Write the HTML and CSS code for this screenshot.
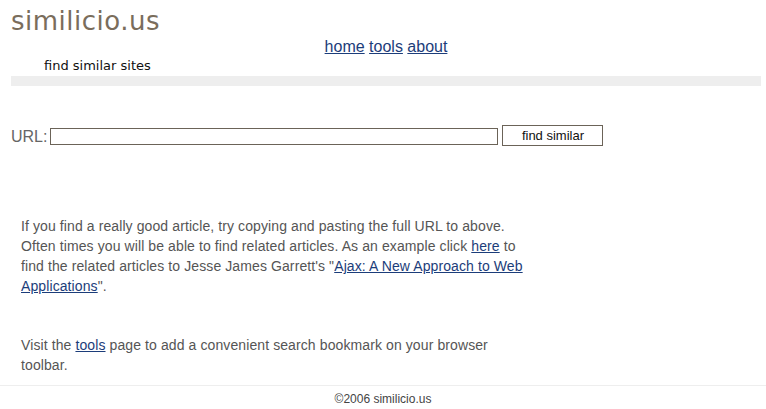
FILE: index.html
```html
<!DOCTYPE html>
<html lang="en">
<head>
  <meta charset="UTF-8">
  <title>similicio.us</title>
  <link rel="stylesheet" href="styles.css">
</head>
<body>
  <div class="page">
    <header>
      <div class="logo">similicio.us</div>
      <nav>
        <a href="#">home</a> <a href="#">tools</a> <a href="#">about</a>
      </nav>
      <div class="tagline">find similar sites</div>
      <div class="bar"></div>
    </header>

    <form class="search">
      <label for="url">URL:</label>
      <input type="text" id="url" class="url-input">
      <button type="button" class="find-btn">find similar</button>
    </form>

    <div class="content">
      <p>If you find a really good article, try copying and pasting the full URL to above.
        Often times you will be able to find related articles. As an example click <a href="#">here</a> to
        find the related articles to Jesse James Garrett's "<a href="#">Ajax: A New Approach to Web Applications</a>".</p>

      <p class="tools-note">Visit the <a href="#">tools</a> page to add a convenient search bookmark on your browser toolbar.</p>
    </div>
  </div>

  <footer>
    &copy;2006 similicio.us
  </footer>
</body>
</html>
```

FILE: styles.css
```css
body {
  font-family: "Liberation Sans", Arial, sans-serif;
  color: #555;
  margin: 0;
  padding: 0;
  background-color: white;
}

.page {
  padding: 0 5px 0 11px;
}

.logo {
  font-family: "DejaVu Sans", sans-serif;
  font-size: 26px;
  color: #7a6d5c; /* brownish gray */
  padding-top: 6px;
  height: 32px;
  letter-spacing: 0.5px;
}

nav {
  text-align: center;
  font-size: 16px;
  height: 20px;
}

nav a,
.content a {
  color: #1c3d7a;
}

.tagline {
  font-family: "DejaVu Sans", sans-serif;
  font-size: 13px;
  color: #111;
  margin-left: 33px;
  height: 17px;
}

.bar {
  background-color: #eeeeee;
  height: 10px;
  margin-top: 1px;
}

.search {
  display: flex;
  align-items: center;
  margin-top: 39px;
}

.search label {
  font-size: 16px;
  color: #666;
  margin-right: 3px;
}

.url-input {
  width: 446px;
  height: 15px;
  padding: 0;
  border: 1px solid #6b6358;
  margin: 0;
}

.find-btn {
  font-family: "Liberation Sans", Arial, sans-serif;
  font-size: 13px;
  width: 101px;
  height: 21px;
  margin: 0 0 2px 4px;
  background-color: white;
  border: 1px solid #6b6358;
  color: #111;
  padding: 0;
}

.content {
  width: 507px;
  padding-left: 10px;
  margin-top: 68px;
  font-size: 14px;
  line-height: 20px;
  letter-spacing: 0.1px;
}

.content p {
  margin: 0;
}

.content .tools-note {
  margin-top: 39px;
  width: 490px;
}

footer {
  border-top: 1px solid #eeeeee;
  margin-top: 10px;
  text-align: center;
  font-size: 12px;
  color: #444;
  padding-top: 6px;
}
```
